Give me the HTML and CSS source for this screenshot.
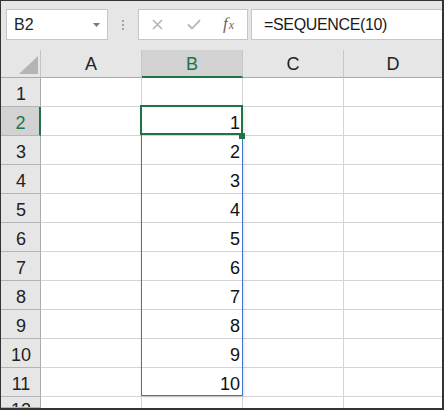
FILE: index.html
```html
<!DOCTYPE html>
<html>
<head>
<meta charset="utf-8">
<link rel="stylesheet" href="styles.css">
</head>
<body>
<div class="frame">
  <div class="toolbar">
    <div class="namebox">
      <span class="nb-text">B2</span>
      <svg class="caret" width="7" height="4" viewBox="0 0 7 4"><polygon points="0,0 7,0 3.5,4" fill="#7a7a7a"/></svg>
    </div>
    <div class="grip"><i></i><i></i><i></i></div>
    <div class="fxbtns">
      <svg class="ico" width="11" height="11" viewBox="0 0 11 11"><path d="M1 1 L10 10 M10 1 L1 10" stroke="#b4b4b4" stroke-width="1.6" fill="none"/></svg>
      <svg class="ico" width="14" height="11" viewBox="0 0 14 11"><path d="M1 5.5 L5 9.5 L13 1.2" stroke="#b4b4b4" stroke-width="1.8" fill="none"/></svg>
      <span class="fx"><i>f</i><i class="x">x</i></span>
    </div>
    <div class="formula">=SEQUENCE(10)</div>
  </div>
  <div class="sheet">
    <div class="corner"><svg width="19" height="18" viewBox="0 0 19 18"><polygon points="19,0 19,18 0,18" fill="#b4b4b4"/></svg></div>
    <div class="colhead">A</div>
    <div class="colhead sel">B</div>
    <div class="colhead">C</div>
    <div class="colhead last">D</div>

    <div class="rowhead">1</div><div class="cell"></div><div class="cell"></div><div class="cell"></div><div class="cell last"></div>
    <div class="rowhead sel">2</div><div class="cell"></div>
    <div class="cell num active">1
      <div class="spill"></div>
      <div class="selbox"><div class="handle"></div></div>
    </div>
    <div class="cell"></div><div class="cell last"></div>
    <div class="rowhead">3</div><div class="cell"></div><div class="cell num">2</div><div class="cell"></div><div class="cell last"></div>
    <div class="rowhead">4</div><div class="cell"></div><div class="cell num">3</div><div class="cell"></div><div class="cell last"></div>
    <div class="rowhead">5</div><div class="cell"></div><div class="cell num">4</div><div class="cell"></div><div class="cell last"></div>
    <div class="rowhead">6</div><div class="cell"></div><div class="cell num">5</div><div class="cell"></div><div class="cell last"></div>
    <div class="rowhead">7</div><div class="cell"></div><div class="cell num">6</div><div class="cell"></div><div class="cell last"></div>
    <div class="rowhead">8</div><div class="cell"></div><div class="cell num">7</div><div class="cell"></div><div class="cell last"></div>
    <div class="rowhead">9</div><div class="cell"></div><div class="cell num">8</div><div class="cell"></div><div class="cell last"></div>
    <div class="rowhead">10</div><div class="cell"></div><div class="cell num">9</div><div class="cell"></div><div class="cell last"></div>
    <div class="rowhead">11</div><div class="cell"></div><div class="cell num">10</div><div class="cell"></div><div class="cell last"></div>
    <div class="rowhead cut">12</div><div class="cell cut"></div><div class="cell cut"></div><div class="cell cut"></div><div class="cell cut last"></div>
  </div>
</div>
</body>
</html>
```

FILE: styles.css
```css
* { box-sizing: border-box; }
html, body { margin: 0; padding: 0; background: #fff; }
body { font-family: "Liberation Sans", Arial, sans-serif; }

.frame {
  width: 444px;
  height: 410px;
  border-top: 1px solid #333;
  border-left: 1px solid #333;
  border-right: 2px solid #333;
  border-bottom: 2px solid #333;
  overflow: hidden;
  display: flex;
  flex-direction: column;
}

.toolbar {
  height: 49px;
  flex: none;
  background: #e6e6e6;
  display: flex;
  align-items: flex-start;
  padding: 8px 0 0 5px;
}

.namebox {
  width: 102px;
  height: 31px;
  background: #fff;
  border: 1px solid #c6c6c6;
  display: flex;
  align-items: center;
  justify-content: space-between;
  padding: 0 7px 0 7px;
}
.nb-text { font-size: 16px; color: #222; line-height: 20px; padding-top: 1px; }
.caret { margin-top: 1px; }

.grip {
  width: 30px;
  height: 31px;
  display: flex;
  flex-direction: column;
  align-items: center;
  justify-content: center;
  gap: 2px;
}
.grip i { display: block; width: 2px; height: 2px; background: #a3a3a3; }

.fxbtns {
  width: 110px;
  height: 31px;
  background: #fff;
  border: 1px solid #c6c6c6;
  display: flex;
  align-items: center;
  padding-left: 13px;
}
.fxbtns .ico:first-child { margin-right: 24px; }
.fxbtns .ico:nth-child(2) { margin-right: 22px; }
.fx {
  font-family: "Liberation Serif", "Times New Roman", serif;
  color: #666;
  font-size: 17px;
  line-height: 17px;
  margin-top: -1px;
  white-space: nowrap;
}
.fx .x { font-size: 12px; margin-left: 1px; }

.formula {
  flex: 1;
  height: 31px;
  margin-left: 3px;
  background: #fff;
  border: 1px solid #c6c6c6;
  border-right: none;
  font-size: 16px;
  letter-spacing: -0.35px;
  color: #1a1a1a;
  padding-left: 12px;
  line-height: 20px;
  padding-top: 5px;
}

.sheet {
  flex: 1;
  display: grid;
  grid-template-columns: 40px 101px 101px 101px 98px;
  grid-template-rows: 28px repeat(11, 29px) 11px;
  font-size: 18px;
  overflow: hidden;
}

.corner {
  background: #e6e6e6;
  border-right: 1px solid #c4c4c4;
  border-bottom: 1px solid #ababab;
  display: flex;
  justify-content: flex-end;
  align-items: flex-end;
  padding: 0 2px 3px 0;
}

.colhead {
  background: #e6e6e6;
  border-right: 1px solid #c8c8c8;
  border-bottom: 1px solid #ababab;
  text-align: center;
  color: #222;
  line-height: 27px;
  padding-top: 1px;
}
.colhead.last { border-right: none; }
.colhead.sel {
  background: #d2d2d2;
  color: #217346;
  border-bottom: 2px solid #217346;
}

.rowhead {
  background: #e6e6e6;
  border-right: 1px solid #ababab;
  border-bottom: 1px solid #b4b4b4;
  color: #222;
  display: flex;
  justify-content: center;
  align-items: flex-end;
  line-height: 20px;
  padding-bottom: 2px;
  padding-left: 1px;
}
.rowhead.sel {
  background: #d2d2d2;
  color: #217346;
  border-right: 2px solid #217346;
}
.rowhead.cut { align-items: flex-start; padding-top: 3px; overflow: hidden; }

.cell {
  border-right: 1px solid #d4d4d4;
  border-bottom: 1px solid #d4d4d4;
  background: #fff;
}
.cell.last { border-right: none; }
.cell.cut { border-bottom: none; }

.num {
  color: #111;
  display: flex;
  justify-content: flex-end;
  align-items: flex-end;
  line-height: 20px;
  padding: 0 2px 2px 0;
}

.active { position: relative; }

.spill {
  position: absolute;
  left: -1px;
  top: -1px;
  width: 102px;
  height: 290px;
  border: 1px solid #3b73c9;
  box-shadow: 1px 1px 4px rgba(0, 0, 0, 0.12);
  pointer-events: none;
}

.selbox {
  position: absolute;
  left: -2px;
  top: -2px;
  width: 103px;
  height: 30px;
  border: 2px solid #217346;
  z-index: 2;
}
.handle {
  position: absolute;
  left: 97px;
  top: 26px;
  width: 6px;
  height: 6px;
  background: #217346;
}
```
